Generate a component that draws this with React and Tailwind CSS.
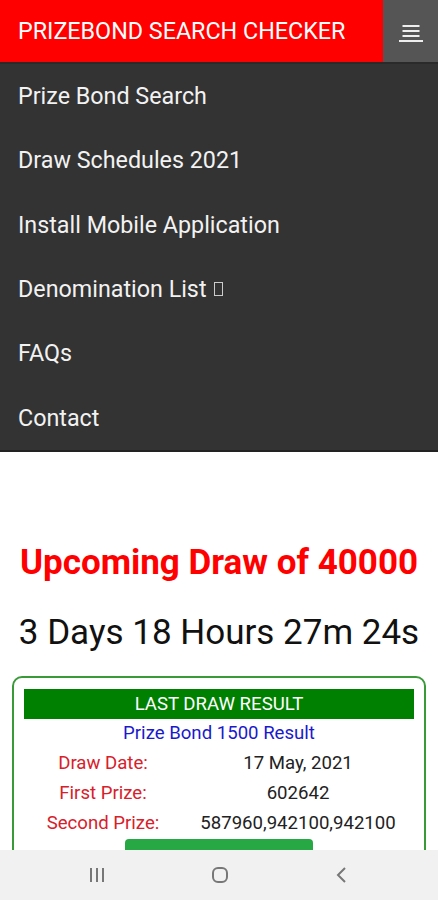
import React from "react";

const menuItems = [
  "Prize Bond Search",
  "Draw Schedules 2021",
  "Install Mobile Application",
  "Denomination List",
  "FAQs",
  "Contact",
];

const results = [
  ["Draw Date:", "17 May, 2021"],
  ["First Prize:", "602642"],
  ["Second Prize:", "587960,942100,942100"],
];

const App = () => {
  return (
    <div className="relative h-[900px] w-[438px] overflow-hidden bg-white font-['Roboto',sans-serif]">
      {/* Top bar */}
      <div className="flex h-16 border-b-2 border-[#2a2a2a]">
        <div className="flex flex-1 items-center bg-[#ff0000] pl-[18px] text-[23.3px] text-white">
          PRIZEBOND SEARCH CHECKER
        </div>
        <div className="flex w-[55px] items-center justify-center bg-[#555555]">
          <svg width="24" height="24" viewBox="0 0 24 24">
            <rect x="3.5" y="6" width="17" height="2" fill="#eee" />
            <rect x="3.5" y="11" width="17" height="2" fill="#eee" />
            <rect x="3.5" y="16" width="17" height="2" fill="#eee" />
            <rect x="0" y="21" width="24" height="2" fill="#eee" />
          </svg>
        </div>
      </div>

      {/* Menu */}
      <div className="border-b-2 border-[#222] bg-[#333333]">
        {menuItems.map((item) => (
          <div
            key={item}
            className="flex h-[64.4px] items-center pl-[18px] text-[23.3px] text-[#f2f2f2]"
          >
            {item}
            {item === "Denomination List" && (
              <span className="ml-[7px] inline-block h-[14px] w-[9px] border border-[#ccc]" />
            )}
          </div>
        ))}
      </div>

      {/* Countdown */}
      <div className="pt-[91px] text-center">
        <h1 className="text-[35px] font-bold leading-[40px] text-[#ff0000]">
          Upcoming Draw of 40000
        </h1>
        <p className="mt-[30px] text-[35px] leading-[40px] text-[#111]">
          3 Days 18 Hours 27m 24s
        </p>
      </div>

      {/* Last draw card */}
      <div className="mx-[12px] mt-[23px] rounded-[10px] border-2 border-[#3a9a3a] px-[10px] pt-[11px]">
        <div className="bg-[#008000] py-[3px] text-center text-[18.6px] leading-[24px] text-white">
          LAST DRAW RESULT
        </div>
        <div className="mt-[2px] text-center text-[18.6px] leading-[24px] text-[#1a1acc]">
          Prize Bond 1500 Result
        </div>
        <div className="mt-[3px] grid grid-cols-[158px_1fr] text-[18.6px] leading-[30px]">
          {results.map(([label, value]) => (
            <React.Fragment key={label}>
              <div className="text-center text-[#d8202a]">{label}</div>
              <div className="text-center text-[#222]">{value}</div>
            </React.Fragment>
          ))}
        </div>
        <div className="mx-auto mt-[1px] h-[40px] w-[188px] rounded-t-[4px] bg-[#28a745]" />
      </div>

      {/* Android nav bar */}
      <div className="absolute bottom-0 left-0 flex h-[50px] w-full items-center justify-between bg-[#f1f1f1] pl-[87px] pr-[86px]">
        <svg width="20" height="18" viewBox="0 0 20 18">
          <rect x="3" y="2" width="2" height="14" fill="#777" />
          <rect x="9" y="2" width="2" height="14" fill="#777" />
          <rect x="15" y="2" width="2" height="14" fill="#777" />
        </svg>
        <svg width="20" height="20" viewBox="0 0 20 20">
          <rect x="3" y="3" width="14" height="14" rx="5" fill="none" stroke="#777" strokeWidth="2" />
        </svg>
        <svg width="20" height="20" viewBox="0 0 20 20">
          <path d="M13 3 L6 10 L13 17" fill="none" stroke="#777" strokeWidth="2" />
        </svg>
      </div>
    </div>
  );
};

export default App;
